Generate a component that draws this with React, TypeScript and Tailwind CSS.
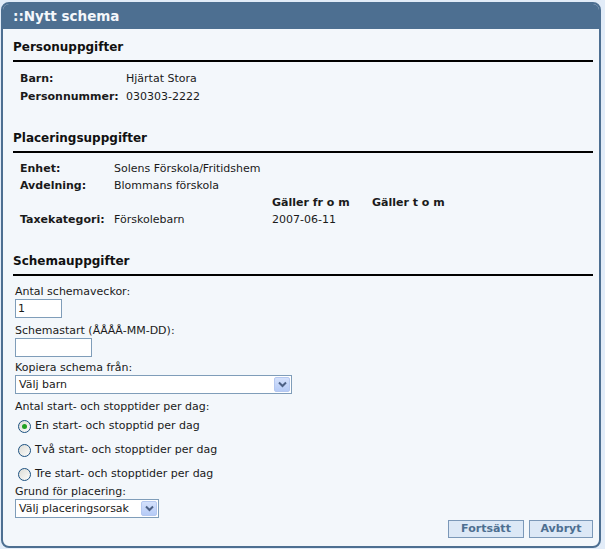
import React from 'react';

const font = { fontFamily: '"DejaVu Sans", Verdana, sans-serif' };

const SectionHeader = ({ title, className = '' }: { title: string; className?: string }) => (
  <div className={`mr-[6px] border-b-2 border-black pb-[5px] ${className}`}>
    <h2 className="text-[12px] leading-[16px] font-bold text-[#111]">{title}</h2>
  </div>
);

const InfoRow = ({ label, value, labelWidth, h }: { label: string; value: string; labelWidth: string; h: string }) => (
  <div className={`flex items-center ${h}`}>
    <span className={`${labelWidth} font-bold`}>{label}</span>
    <span>{value}</span>
  </div>
);

const FakeSelect = ({ value, width }: { value: string; width: string }) => (
  <div className={`${width} h-[19px] flex items-center border border-[#7f9db9] bg-white pl-[3px] pr-[1px]`}>
    <span className="flex-1 leading-[17px]">{value}</span>
    <span className="w-[16px] h-[15px] rounded-[2px] bg-gradient-to-b from-[#d4e1fc] to-[#b6cbf6] border border-[#b5c8f0] flex items-center justify-center">
      <svg width="9" height="7" viewBox="0 0 9 7">
        <path d="M1 1.5 L4.5 5 L8 1.5" stroke="#4d6185" strokeWidth="2" fill="none" />
      </svg>
    </span>
  </div>
);

const Radio = ({ checked, label }: { checked?: boolean; label: string }) => (
  <label className="flex items-center h-[24px] pl-[3px]">
    <span className="w-[13px] h-[13px] rounded-full border border-[#1c5180] bg-gradient-to-br from-[#dcdcd6] to-[#fcfcfb] flex items-center justify-center">
      {checked && <span className="w-[5px] h-[5px] rounded-full bg-[#21a121]" />}
    </span>
    <span className="ml-[4px]">{label}</span>
  </label>
);

export default function App() {
  return (
    <div className="w-[605px] h-[549px] bg-[#e2ecf8] pt-[2px] pl-[1px]" style={font}>
      <div className="w-[600px] h-[546px] flex flex-col rounded-[8px] border-2 border-[#4d6f91] bg-[#f3f7fb] overflow-hidden text-[11px] text-[#1a1a1a]">
        <div className="h-[25px] shrink-0 bg-[#4d6f91] flex items-center pl-[10px]">
          <span className="text-[13.5px] font-bold text-[#f4f7fb]">::Nytt schema</span>
        </div>
        <div className="flex-1 flex flex-col pl-[10px]">
          <SectionHeader title="Personuppgifter" className="mt-[10px]" />
          <div className="mt-[8px] pl-[7px]">
            <InfoRow label="Barn:" value="Hjärtat Stora" labelWidth="w-[106px]" h="h-[18px]" />
            <InfoRow label="Personnummer:" value="030303-2222" labelWidth="w-[106px]" h="h-[18px]" />
          </div>

          <SectionHeader title="Placeringsuppgifter" className="mt-[24px]" />
          <div className="mt-[8px] pl-[7px]">
            <InfoRow label="Enhet:" value="Solens Förskola/Fritidshem" labelWidth="w-[94px]" h="h-[17px]" />
            <InfoRow label="Avdelning:" value="Blommans förskola" labelWidth="w-[94px]" h="h-[17px]" />
            <div className="flex items-center h-[17px] font-bold">
              <span className="w-[252px]" />
              <span className="w-[100px]">Gäller fr o m</span>
              <span>Gäller t o m</span>
            </div>
            <div className="flex items-center h-[17px]">
              <span className="w-[94px] font-bold">Taxekategori:</span>
              <span className="w-[158px]">Förskolebarn</span>
              <span>2007-06-11</span>
            </div>
          </div>

          <SectionHeader title="Schemauppgifter" className="mt-[24px]" />
          <div className="pl-[2px] flex flex-col">
            <div className="mt-[8px] h-[15px] leading-[15px]">Antal schemaveckor:</div>
            <input
              readOnly
              value="1"
              className="w-[47px] h-[19px] border border-[#7f9db9] bg-white px-[2px] text-[11px] outline-none"
              style={font}
            />
            <div className="mt-[5px] h-[15px] leading-[15px]">Schemastart (ÅÅÅÅ-MM-DD):</div>
            <input
              readOnly
              value=""
              className="w-[77px] h-[19px] border border-[#7f9db9] bg-white px-[2px] text-[11px] outline-none"
              style={font}
            />
            <div className="mt-[3px] h-[15px] leading-[15px]">Kopiera schema från:</div>
            <FakeSelect value="Välj barn" width="w-[277px]" />
            <div className="mt-[5px] h-[15px] leading-[15px]">Antal start- och stopptider per dag:</div>
            <div className="flex flex-col">
              <Radio checked label="En start- och stopptid per dag" />
              <Radio label="Två start- och stopptider per dag" />
              <Radio label="Tre start- och stopptider per dag" />
            </div>
            <div className="mt-[-2px] h-[15px] leading-[15px]">Grund för placering:</div>
            <FakeSelect value="Välj placeringsorsak" width="w-[144px]" />
          </div>
          <div className="flex justify-end gap-[5px] pr-[6px] mt-[2px]">
            <button className="w-[76px] h-[18px] border border-[#7b98b8] bg-[#dce8f6] text-[11px] font-bold text-[#4d6f91] leading-[16px]">
              Fortsätt
            </button>
            <button className="w-[64px] h-[18px] border border-[#7b98b8] bg-[#dce8f6] text-[11px] font-bold text-[#4d6f91] leading-[16px]">
              Avbryt
            </button>
          </div>
        </div>
      </div>
    </div>
  );
}
